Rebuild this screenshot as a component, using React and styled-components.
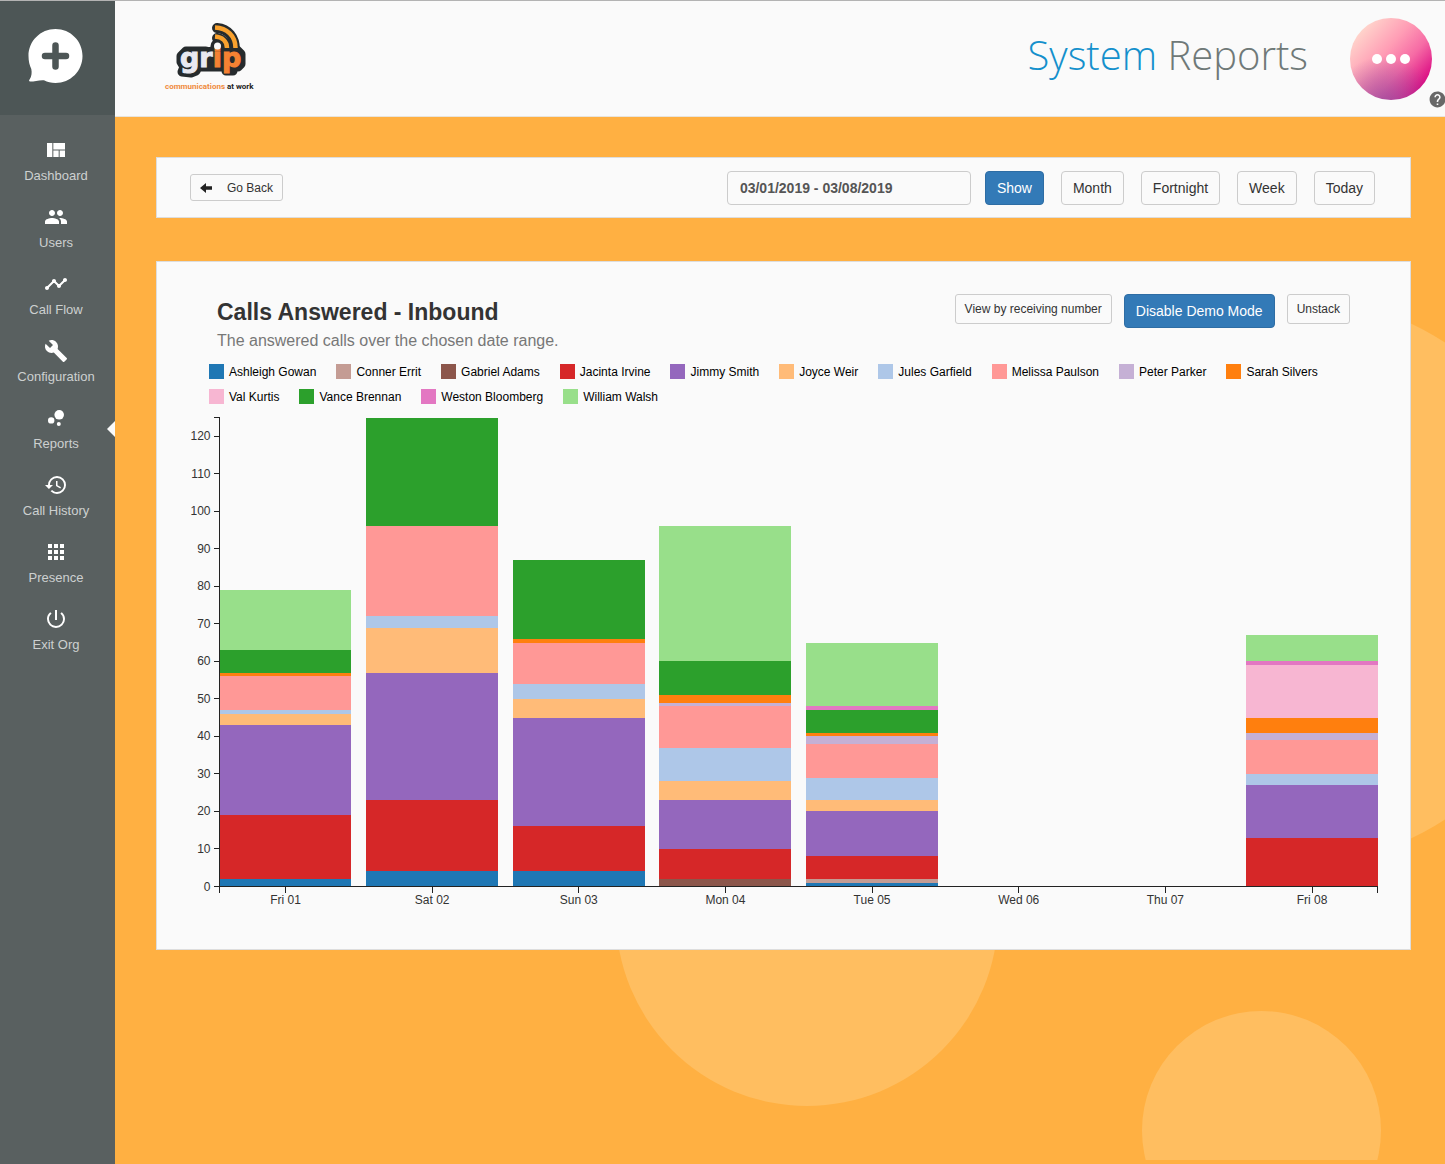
import React, {useState} from "react";
import styled, {createGlobalStyle, css} from "styled-components";
import {
  MdApps,
  MdBubbleChart,
  MdBuild,
  MdHelp,
  MdHistory,
  MdPeople,
  MdPowerSettingsNew,
  MdTimeline,
  MdViewQuilt,
} from "react-icons/md";

const GlobalStyle = createGlobalStyle`
  *, *::before, *::after {
    box-sizing: border-box;
  }

  body {
    margin: 0;
    overflow-x: hidden;
    color: #333;
    font-family: "Liberation Sans", Arial, sans-serif;
    font-size: 14px;
  }
`;

const Page = styled.div`
  display: flex;
  min-height: 100vh;
  border-top: 1px solid #b3b3b3;
`;

const Sidebar = styled.aside`
  flex: 0 0 115px;
  background-color: #596060;
`;

const Brand = styled.a`
  display: block;
  height: 114px;
  padding: 27px 0 0 27px;
  background-color: #4d5656;
`;

const NavList = styled.ul`
  margin: 0;
  padding: 15px 0 0;
  list-style: none;
`;

const NavItem = styled.li`
  position: relative;
  height: 67px;

  ${props => props.$active && css`
    &::after {
      content: '';
      position: absolute;
      top: 23px;
      right: 0;
      border: 8px solid transparent;
      border-left-width: 0;
      border-right-color: #fafafa;
    }
  `}
`;

const NavLink = styled.a`
  display: flex;
  flex-direction: column;
  align-items: center;
  gap: 4px;
  padding: 8px 3px 0 0;
  color: #cdd0d0;
  font-size: 13px;
  line-height: 20px;
  text-decoration: none;

  svg {
    color: #fff;
  }
`;

const Content = styled.div`
  flex: 1;
  min-width: 0;
  display: flex;
  flex-direction: column;
`;

const Header = styled.header`
  position: relative;
  display: flex;
  align-items: center;
  justify-content: space-between;
  height: 116px;
  padding: 0 13px 0 45px;
  background-color: #fafafa;
  border-bottom: 1px solid #e8e4dc;
`;

const HeaderRight = styled.div`
  display: flex;
  align-items: center;
  gap: 42px;
`;

const PageTitle = styled.h1`
  margin: 0;
  padding-bottom: 8px;
  color: #6f7978;
  font-family: "Open Sans", sans-serif;
  font-size: 40px;
  font-weight: 300;
  line-height: 48px;
`;

const Accent = styled.span`
  color: #1490cc;
`;

const MenuButton = styled.button`
  display: flex;
  align-items: center;
  justify-content: center;
  gap: 4px;
  width: 82px;
  height: 82px;
  padding: 0;
  border: 0;
  border-radius: 50%;
  background:
    radial-gradient(circle at 42% 112%, rgba(150, 80, 160, .9), rgba(190, 80, 160, 0) 52%),
    linear-gradient(132deg, #ffe0d0 8%, #ff9db5 42%, #f66ba5 62%, #d8007f 88%);
`;

const Dot = styled.span`
  width: 10px;
  height: 10px;
  border-radius: 50%;
  background-color: #fff;
`;

const HelpLink = styled.a`
  position: absolute;
  right: -2px;
  bottom: 6px;
  height: 20px;
  color: #686868;
`;

const Main = styled.main`
  position: relative;
  flex: 1;
  padding: 40px 34px 40px 41px;
  background-color: #ffb042;
`;

const Backdrop = styled.div`
  position: absolute;
  inset: 0 0 4px;
  overflow: hidden;
`;

const Bubble = styled.div`
  position: absolute;
  top: ${props => props.$top}px;
  right: ${props => props.$right}px;
  width: ${props => props.$size}px;
  height: ${props => props.$size}px;
  border-radius: 50%;
  background-color: #ffbe60;
`;

const Card = styled.section`
  position: relative;
  background-color: #fafafa;
  border: 1px solid #ddd;
`;

const Toolbar = styled(Card)`
  display: flex;
  align-items: center;
  justify-content: space-between;
  height: 61px;
  margin-bottom: 43px;
  padding: 0 35px 0 33px;
`;

const Filters = styled.form`
  display: flex;
  gap: 17px;
`;

const DateRange = styled.div`
  display: flex;
  gap: 14px;
`;

const DateInput = styled.input`
  width: 244px;
  height: 34px;
  padding: 0 12px;
  border: 1px solid #ccc;
  border-radius: 4px;
  background-color: #fafafa;
  color: #555;
  font: bold 14px "Liberation Sans", Arial, sans-serif;
`;

const Button = styled.button`
  display: inline-flex;
  align-items: center;
  height: 34px;
  padding: 0 11px;
  border: 1px solid ${props => props.$primary ? '#2e6da4' : '#ccc'};
  border-radius: 4px;
  background-color: ${props => props.$primary ? '#337ab7' : '#fafafa'};
  color: ${props => props.$primary ? '#fff' : '#333'};
  font-family: inherit;
  font-size: 14px;
  white-space: nowrap;
`;

const SmallButton = styled(Button)`
  height: 30px;
  padding: 0 9px;
  border-radius: 3px;
  font-size: 12px;
`;

const BackButton = styled(SmallButton)`
  gap: 14px;
  height: 27px;
`;

const ReportCard = styled(Card)`
  padding: 32px 30px 37px;
`;

const ReportHead = styled.div`
  display: flex;
  justify-content: space-between;
  padding: 0 30px;
`;

const ReportTitle = styled.h2`
  margin: 0;
  font-size: 23px;
  line-height: 36px;
`;

const ReportNote = styled.p`
  margin: 0;
  color: #777;
  font-size: 16px;
  line-height: 22px;
`;

const Actions = styled.div`
  display: flex;
  align-items: flex-start;
  gap: 12px;
`;

const Legend = styled.ul`
  display: flex;
  flex-wrap: wrap;
  column-gap: 20px;
  margin: 7px 0 0;
  padding: 0 0 0 22px;
  list-style: none;
`;

const LegendItem = styled.li`
  display: flex;
  align-items: center;
  gap: 5px;
  height: 25px;
  color: #000;
  font-size: 12px;
`;

const Swatch = styled.span`
  width: 15px;
  height: 15px;
  background-color: ${props => props.$color};
`;

const ChartSvg = styled.svg`
  display: block;
  width: 100%;
  height: auto;

  text {
    fill: #333;
    font-size: 12px;
  }

  rect, path {
    shape-rendering: crispEdges;
  }

  path {
    fill: none;
    stroke: #222;
  }
`;

const LogoSvg = styled.svg`
  display: block;
  margin-bottom: 6px;
`;

const LogoWord = styled.text`
  font-family: "DejaVu Sans", sans-serif;
  font-size: 27px;
  font-weight: bold;
`;

const LogoTagline = styled.text`
  font-family: Roboto, sans-serif;
  font-size: 8px;
  font-weight: bold;
`;

const navItems = [
  {label: 'Dashboard', Icon: MdViewQuilt},
  {label: 'Users', Icon: MdPeople},
  {label: 'Call Flow', Icon: MdTimeline},
  {label: 'Configuration', Icon: MdBuild},
  {label: 'Reports', Icon: MdBubbleChart, active: true},
  {label: 'Call History', Icon: MdHistory},
  {label: 'Presence', Icon: MdApps},
  {label: 'Exit Org', Icon: MdPowerSettingsNew},
];

// listed in stacking order, bottom first
const people = [
  {name: 'Ashleigh Gowan', color: '#1f77b4'},
  {name: 'Conner Errit', color: '#c49c94'},
  {name: 'Gabriel Adams', color: '#8c564b'},
  {name: 'Jacinta Irvine', color: '#d62728'},
  {name: 'Jimmy Smith', color: '#9467bd'},
  {name: 'Joyce Weir', color: '#ffbb78'},
  {name: 'Jules Garfield', color: '#aec7e8'},
  {name: 'Melissa Paulson', color: '#ff9896'},
  {name: 'Peter Parker', color: '#c5b0d5'},
  {name: 'Sarah Silvers', color: '#ff7f0e'},
  {name: 'Val Kurtis', color: '#f7b6d2'},
  {name: 'Vance Brennan', color: '#2ca02c'},
  {name: 'Weston Bloomberg', color: '#e377c2'},
  {name: 'William Walsh', color: '#98df8a'},
];

const days = [
  {label: 'Fri 01', calls: [2, 0, 0, 17, 24, 3, 1, 9, 0, 1, 0, 6, 0, 16]},
  {label: 'Sat 02', calls: [4, 0, 0, 19, 34, 12, 3, 24, 0, 0, 0, 29, 0, 0]},
  {label: 'Sun 03', calls: [4, 0, 0, 12, 29, 5, 4, 11, 0, 1, 0, 21, 0, 0]},
  {label: 'Mon 04', calls: [0, 0, 2, 8, 13, 5, 9, 11, 1, 2, 0, 9, 0, 36]},
  {label: 'Tue 05', calls: [1, 1, 0, 6, 12, 3, 6, 9, 2, 1, 0, 6, 1, 17]},
  {label: 'Wed 06', calls: []},
  {label: 'Thu 07', calls: []},
  {label: 'Fri 08', calls: [0, 0, 0, 13, 14, 0, 3, 9, 2, 4, 14, 0, 1, 7]},
];

const ranges = ['Month', 'Fortnight', 'Week', 'Today'];

const chart = {width: 1193, height: 503, left: 32.5, right: 1191, top: 8.5, bottom: 477.5, max: 125};
const step = (chart.right - chart.left) / (days.length - .1);
const barWidth = step * .9;
const yScale = value => chart.bottom - value * (chart.bottom - chart.top) / chart.max;
const yTicks = Array.from({length: 13}, (_, i) => i * 10);

const BrandMark = () => (
  <svg width="56" height="56" viewBox="0 0 56 56" aria-hidden="true">
    <path
      fill="#fff"
      d="M28.5 1C43.500 1 55.500 13 55.500 28S43.500 55 28.500 55C24 55 20.500 54 17 52.300C12.500 51.800 7.500 53.600 3.200 53.600C1.700 53.600 1.900 52.400 2.700 51.300C4.700 48.400 5 44.500 4.300 41C2.500 37 1.500 33 1.500 28C1.500 13 13.500 1 28.500 1Z"
    />
    <path stroke="#4d5656" strokeWidth="6.500" strokeLinecap="round" d="M28.500 17.500V38.500M18 28H39" />
  </svg>
);

const GripLogo = () => (
  <LogoSvg width="100" height="80" viewBox="0 0 100 80" role="img" aria-label="grip communications at work">
    <g fill="none" stroke="#262b2d" strokeLinecap="round" strokeWidth="10">
      <path d="M57 12C68 13 75 21 75 34" />
      <path d="M57 22C63 23 67 28 67 36" />
    </g>
    <circle cx="57.500" cy="30" r="7" fill="#262b2d" />
    <path
      fill="#262b2d"
      stroke="#262b2d"
      strokeWidth="9"
      strokeLinejoin="round"
      d="M26 35H45L50 36L54 34H77L81 38V48L78 51H73V55H66V51H38L36 55L31 57L22 56L24 51L21 46V40Z"
    />
    <LogoWord x="20" y="51" fill="#e9e9f1" stroke="#e9e9f1" strokeWidth="1">
      gr<tspan fill="#f58233" stroke="#f58233">ip</tspan>
    </LogoWord>
    <g fill="none" stroke="#f9a12e" strokeWidth="4.500">
      <path d="M55 11.500C67 12 75.500 20 75.500 32" />
      <path d="M55 20.500C62 21 67 25 67 32" />
    </g>
    <circle cx="57.500" cy="30" r="3.500" fill="#fafafa" />
    <LogoTagline x="5" y="73" fill="#f08a3c">communications <tspan fill="#222">at work</tspan></LogoTagline>
  </LogoSvg>
);

const ArrowLeft = () => (
  <svg width="13" height="10" viewBox="0 0 13 10" aria-hidden="true">
    <path fill="#222" d="M0 5L6 0V3.200H12V6.800H6V10Z" />
  </svg>
);

const DayBar = ({day, index}) => {
  let total = 0;
  return day.calls.map((count, i) => {
    if (!count) return null;
    total += count;
    return (
      <rect
        key={people[i].name}
        x={chart.left + index * step}
        y={yScale(total)}
        width={barWidth}
        height={yScale(total - count) - yScale(total)}
        fill={people[i].color}
      />
    );
  });
};

const CallsChart = () => (
  <ChartSvg viewBox={`0 0 ${chart.width} ${chart.height}`} role="img" aria-label="Calls answered per day">
    {days.map((day, i) => <DayBar key={day.label} day={day} index={i} />)}
    <path d={`M${chart.left - 6} ${chart.top}H${chart.left}V${chart.bottom}H${chart.left - 6}`} />
    <path d={`M${chart.left} ${chart.bottom + 6}V${chart.bottom}H${chart.right - .5}V${chart.bottom + 6}`} />
    {yTicks.map(tick => (
      <g key={tick}>
        <path d={`M${chart.left - 6} ${yScale(tick)}H${chart.left}`} />
        <text x={chart.left - 9} y={yScale(tick) + 4} textAnchor="end">{tick}</text>
      </g>
    ))}
    {days.map((day, i) => {
      const x = chart.left + i * step + barWidth / 2;
      return (
        <g key={day.label}>
          <path d={`M${x} ${chart.bottom}V${chart.bottom + 6}`} />
          <text x={x} y={chart.bottom + 17} textAnchor="middle">{day.label}</text>
        </g>
      );
    })}
  </ChartSvg>
);

const App = () => {
  const [dates, setDates] = useState('03/01/2019 - 03/08/2019');
  return (
    <>
      <GlobalStyle />
      <Page>
        <Sidebar>
          <Brand href="#" aria-label="Home"><BrandMark /></Brand>
          <nav>
            <NavList>
              {navItems.map(({label, Icon, active}) => (
                <NavItem key={label} $active={active}>
                  <NavLink href="#" aria-current={active ? 'page' : undefined}>
                    <Icon size={24} />
                    {label}
                  </NavLink>
                </NavItem>
              ))}
            </NavList>
          </nav>
        </Sidebar>
        <Content>
          <Header>
            <GripLogo />
            <HeaderRight>
              <PageTitle><Accent>System</Accent> Reports</PageTitle>
              <MenuButton aria-label="Menu"><Dot /><Dot /><Dot /></MenuButton>
            </HeaderRight>
            <HelpLink href="#" aria-label="Help"><MdHelp size={19} /></HelpLink>
          </Header>
          <Main>
            <Backdrop>
              <Bubble $size={570} $top={179} $right={-129} />
              <Bubble $size={382} $top={607} $right={447} />
              <Bubble $size={239} $top={894} $right={64} />
            </Backdrop>
            <Toolbar>
              <BackButton><ArrowLeft /> Go Back</BackButton>
              <Filters onSubmit={e => e.preventDefault()}>
                <DateRange>
                  <DateInput aria-label="Date range" value={dates} onChange={e => setDates(e.target.value)} />
                  <Button $primary>Show</Button>
                </DateRange>
                {ranges.map(range => <Button key={range} type="button">{range}</Button>)}
              </Filters>
            </Toolbar>
            <ReportCard>
              <ReportHead>
                <div>
                  <ReportTitle>Calls Answered - Inbound</ReportTitle>
                  <ReportNote>The answered calls over the chosen date range.</ReportNote>
                </div>
                <Actions>
                  <SmallButton>View by receiving number</SmallButton>
                  <Button $primary>Disable Demo Mode</Button>
                  <SmallButton>Unstack</SmallButton>
                </Actions>
              </ReportHead>
              <Legend>
                {people.map(({name, color}) => (
                  <LegendItem key={name}><Swatch $color={color} />{name}</LegendItem>
                ))}
              </Legend>
              <CallsChart />
            </ReportCard>
          </Main>
        </Content>
      </Page>
    </>
  );
};

export default App;
